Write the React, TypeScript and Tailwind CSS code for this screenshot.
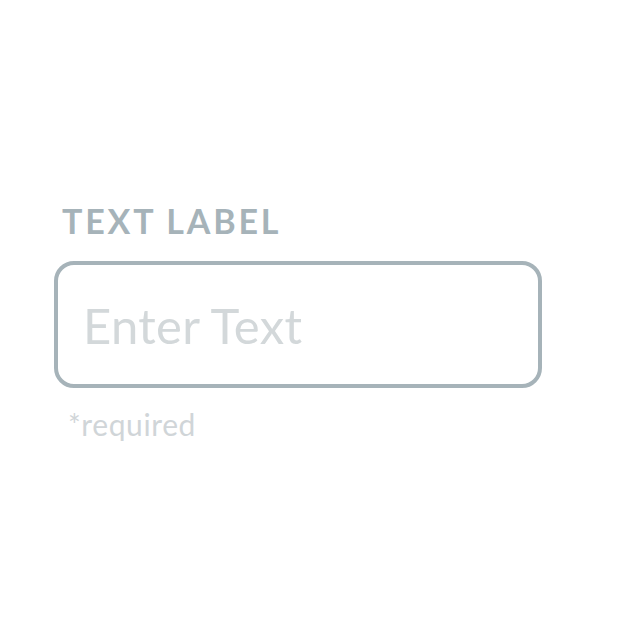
import React from 'react';

function TextField() {
  return (
    <div className="flex flex-col">
      <label className="ml-[8px] text-[34px] font-bold leading-none tracking-[2.8px] text-[#a6b3b9]">
        TEXT LABEL
      </label>
      <input
        type="text"
        placeholder="Enter Text"
        className="mt-[23px] h-[127px] w-[488px] rounded-[20px] border-4 border-[#a6b3b9] bg-white px-[25px] text-[49px] tracking-[0.3px] text-[#6b7b82] outline-none placeholder:text-[#d3d8da]"
      />
      <p className="ml-[14px] mt-[21px] text-[30px] leading-none tracking-[0.6px] text-[#d0d5d8]">*required</p>
    </div>
  );
}

export default function App() {
  return (
    <div className="h-[625px] w-[625px] bg-white pl-[54px] pt-[204px]" style={{ fontFamily: 'Lato, "Open Sans", sans-serif' }}>
      <TextField />
    </div>
  );
}
